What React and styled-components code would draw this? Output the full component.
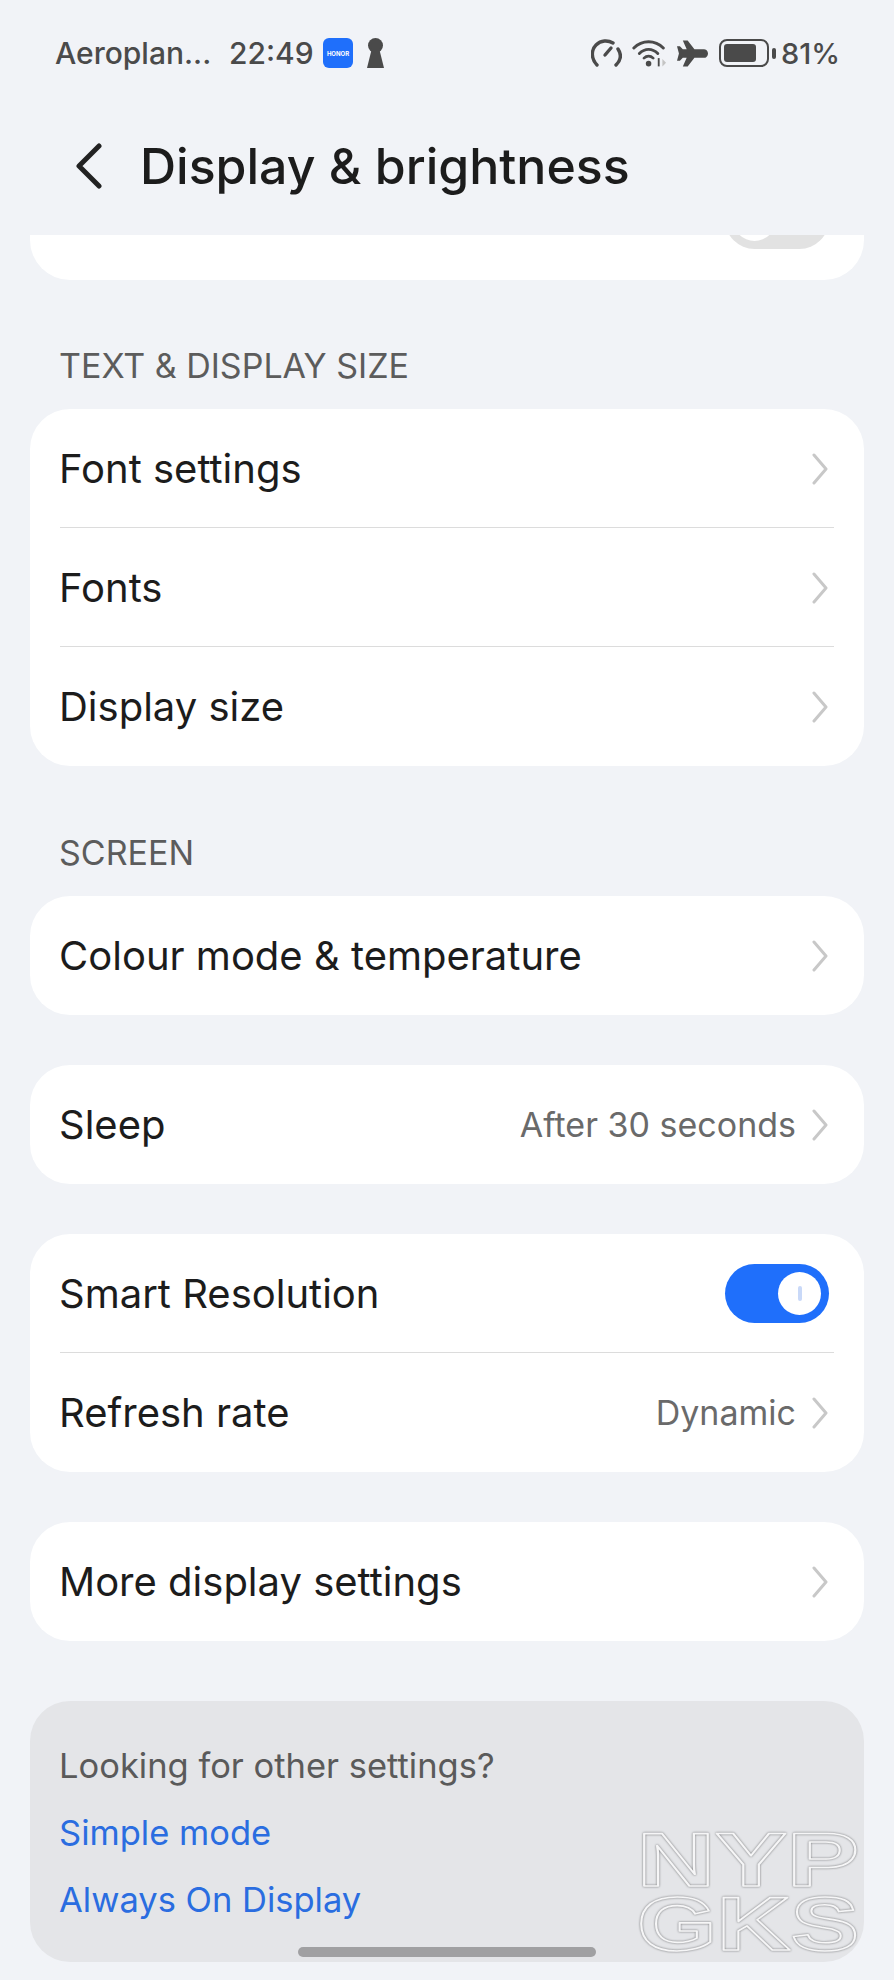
import React from 'react'
import styled, { createGlobalStyle } from 'styled-components'

const GlobalStyle = createGlobalStyle`
  html, body {
    margin: 0;
    padding: 0;
    background: #f1f3f7;
  }
  * { box-sizing: border-box; }
`

function Chevron() {
  return (
    <ChevronIcon viewBox="0 0 16 32" fill="none">
      <path d="M2 2 L14 16 L2 30" stroke="#c8c8c8" strokeWidth="3" strokeLinecap="round" strokeLinejoin="round" />
    </ChevronIcon>
  )
}

function Row({ label, value, toggle, divider }) {
  return (
    <RowWrap>
      <RowLabel>{label}</RowLabel>
      {value && <RowValue>{value}</RowValue>}
      {toggle ? <Toggle $on><Knob><KnobMark /></Knob></Toggle> : <Chevron />}
      {divider && <Divider />}
    </RowWrap>
  )
}

function StatusIcons() {
  return (
    <IconRow>
      <svg width="31" height="28" viewBox="0 0 31 28" fill="none" stroke="#4a4a4a" strokeWidth="3.4" strokeLinecap="round">
        <path d="M6 26 C0 20 0 11 5 6 C10 1 17 1 22 4" />
        <path d="M27 10 C31 16 30 21 25 26" />
        <path d="M14 16 L20 9" />
      </svg>
      <svg width="35" height="29" viewBox="0 0 38 30" fill="none">
        <path d="M2 9 C11 0 25 0 34 9" stroke="#4a4a4a" strokeWidth="3.2" strokeLinecap="round" />
        <path d="M8 15 C14 9 22 9 28 15" stroke="#4a4a4a" strokeWidth="3.2" strokeLinecap="round" />
        <path d="M13 20 C16 17 20 17 23 20" stroke="#4a4a4a" strokeWidth="3" strokeLinecap="round" />
        <circle cx="18" cy="26" r="3" fill="#4a4a4a" />
        <path d="M29 20 V29" stroke="#4a4a4a" strokeWidth="2" />
        <path d="M33 21 L37 25 L33 29 Z" fill="#c4c4c4" />
      </svg>
      <svg width="31" height="27" viewBox="0 0 32 27" fill="#4a4a4a">
        <path d="M6 0 H11 L18 9 H28 C31 9 32 12 32 13.5 C32 15 31 18 28 18 H18 L11 27 H6 L10 18 H6 L3 21 H0 L2 13.5 L0 6 H3 L6 9 H10 Z" />
      </svg>
      <Battery>
        <BatteryBody><BatteryFill /></BatteryBody>
        <BatteryTip />
      </Battery>
      <Percent>81%</Percent>
    </IconRow>
  )
}

export default function App() {
  return (
    <Page>
      <GlobalStyle />
      <StatusBar>
        <Carrier>Aeroplan...</Carrier>
        <Time>22:49</Time>
        <HonorBadge>HONOR</HonorBadge>
        <svg width="17" height="30" viewBox="0 0 17 30" fill="#4a4a4a">
          <circle cx="8.5" cy="7.5" r="7.5" />
          <path d="M5 10 H12 L17 30 H0 Z" />
        </svg>
        <StatusRight>
          <StatusIcons />
        </StatusRight>
      </StatusBar>

      <Header>
        <BackIcon viewBox="0 0 26 46" fill="none">
          <path d="M23 3 L3 23 L23 43" stroke="#222" strokeWidth="5" strokeLinecap="round" strokeLinejoin="round" />
        </BackIcon>
        <Title>Display &amp; brightness</Title>
      </Header>

      <ClippedCard>
        <Toggle><Knob /></Toggle>
      </ClippedCard>

      <SectionLabel>TEXT &amp; DISPLAY SIZE</SectionLabel>
      <Card>
        <Row label="Font settings" divider />
        <Row label="Fonts" divider />
        <Row label="Display size" />
      </Card>

      <SectionLabel $height={130}>SCREEN</SectionLabel>
      <Card>
        <Row label="Colour mode & temperature" />
      </Card>

      <Card $top={50}>
        <Row label="Sleep" value="After 30 seconds" />
      </Card>

      <Card $top={50}>
        <Row label="Smart Resolution" toggle divider />
        <Row label="Refresh rate" value="Dynamic" />
      </Card>

      <Card $top={50}>
        <Row label="More display settings" />
      </Card>

      <HintCard>
        <HintText>Looking for other settings?</HintText>
        <HintLink>Simple mode</HintLink>
        <HintLink>Always On Display</HintLink>
        <Watermark viewBox="0 0 224 122">
          <text x="1" y="56" textLength="222" lengthAdjust="spacingAndGlyphs">NYP</text>
          <text x="1" y="120" textLength="222" lengthAdjust="spacingAndGlyphs">GKS</text>
        </Watermark>
      </HintCard>

      <HomeBar />
    </Page>
  )
}

const Page = styled.div`
  position: relative;
  width: 894px;
  height: 1980px;
  overflow: hidden;
  background: #f1f3f7;
  font-family: Inter, "Noto Sans", sans-serif;
  color: #1c1c1c;
`

const StatusBar = styled.div`
  height: 112px;
  padding: 0 54px 6px 55px;
  display: flex;
  align-items: center;
  color: #4a4a4a;
`

const Carrier = styled.span`
  font-size: 30px;
  font-weight: 500;
  width: 174px;
  white-space: nowrap;
`

const Time = styled.span`
  font-size: 30px;
  font-weight: 500;
  width: 94px;
`

const HonorBadge = styled.span`
  width: 30px;
  height: 30px;
  margin-right: 14px;
  border-radius: 6px;
  background: #1f6ffb;
  color: #fff;
  font-size: 6px;
  font-weight: 700;
  display: flex;
  align-items: center;
  justify-content: center;
`

const StatusRight = styled.div`
  margin-left: auto;
`

const IconRow = styled.div`
  display: flex;
  align-items: center;
  gap: 10px;
`

const Battery = styled.div`
  display: flex;
  align-items: center;
  gap: 3px;
  margin-left: 1px;
`

const BatteryBody = styled.div`
  width: 50px;
  height: 28px;
  padding: 3px;
  border: 2.5px solid #4a4a4a;
  border-radius: 8px;
`

const BatteryFill = styled.div`
  width: 81%;
  height: 100%;
  border-radius: 3px;
  background: #4a4a4a;
`

const BatteryTip = styled.div`
  width: 4px;
  height: 11px;
  border-radius: 2px;
  background: #4a4a4a;
`

const Percent = styled.span`
  font-size: 29px;
  font-weight: 500;
  margin-left: -5px;
`

const Header = styled.div`
  height: 123px;
  padding: 0 0 15px 76px;
  display: flex;
  align-items: center;
`

const BackIcon = styled.svg`
  width: 26px;
  height: 46px;
  margin-right: 38px;
`

const Title = styled.h1`
  margin: 0;
  font-size: 50px;
  font-weight: 500;
  color: #1c1c1c;
`

const Card = styled.div`
  margin: ${(p) => p.$top || 0}px 30px 0;
  background: #fff;
  border-radius: 40px;
  overflow: hidden;
`

const ClippedCard = styled.div`
  height: 45px;
  margin: 0 30px;
  padding-right: 35px;
  display: flex;
  justify-content: flex-end;
  align-items: flex-end;
  background: #fff;
  border-radius: 0 0 40px 40px;
  overflow: hidden;
  & > div {
    flex: none;
    margin-bottom: 31px;
  }
`

const SectionLabel = styled.div`
  height: ${(p) => p.$height || 129}px;
  padding: 0 0 25px 59px;
  display: flex;
  align-items: flex-end;
  font-size: 34px;
  line-height: 36px;
  color: #5c5c5c;
`

const RowWrap = styled.div`
  position: relative;
  height: 119px;
  padding: 0 35px 0 29px;
  display: flex;
  align-items: center;
`

const RowLabel = styled.span`
  flex: 1;
  font-size: 40px;
  color: #1c1c1c;
`

const RowValue = styled.span`
  margin-right: 16px;
  font-size: 34px;
  color: #6a6a6a;
`

const ChevronIcon = styled.svg`
  width: 16px;
  height: 32px;
  margin-right: 1px;
`

const Divider = styled.div`
  position: absolute;
  left: 30px;
  right: 30px;
  bottom: 0;
  height: 1px;
  background: #dcdcdc;
`

const Toggle = styled.div`
  width: 104px;
  height: 59px;
  padding: 8px;
  display: flex;
  justify-content: ${(p) => (p.$on ? 'flex-end' : 'flex-start')};
  border-radius: 30px;
  background: ${(p) => (p.$on ? '#1f6ffb' : '#e2e2e2')};
`

const Knob = styled.div`
  width: 43px;
  height: 43px;
  border-radius: 50%;
  background: #fff;
  display: flex;
  align-items: center;
  justify-content: center;
`

const KnobMark = styled.div`
  width: 4px;
  height: 15px;
  border-radius: 2px;
  background: #c9d9f8;
`

const HintCard = styled.div`
  position: relative;
  height: 261px;
  margin: 60px 30px 0;
  padding: 31px 29px 0;
  border-radius: 40px;
  background: #e4e5e8;
`

const HintText = styled.div`
  font-size: 34.5px;
  line-height: 67px;
  color: #5a5a5a;
`

const HintLink = styled.div`
  font-size: 34.5px;
  line-height: 67px;
  color: #2a6de0;
`

const Watermark = styled.svg`
  position: absolute;
  right: 4px;
  bottom: 10px;
  width: 224px;
  height: 122px;
  overflow: visible;
  filter: drop-shadow(0 0 1px #6f7072);
  text {
    font-family: "Liberation Sans", sans-serif;
    font-weight: 700;
    font-size: 76px;
    fill: none;
    stroke: #f6f6f7;
    stroke-width: 1.6px;
    stroke-linejoin: round;
  }
`

const HomeBar = styled.div`
  position: absolute;
  left: 298px;
  top: 1947px;
  width: 298px;
  height: 10px;
  border-radius: 5px;
  background: #a0a0a2;
`
